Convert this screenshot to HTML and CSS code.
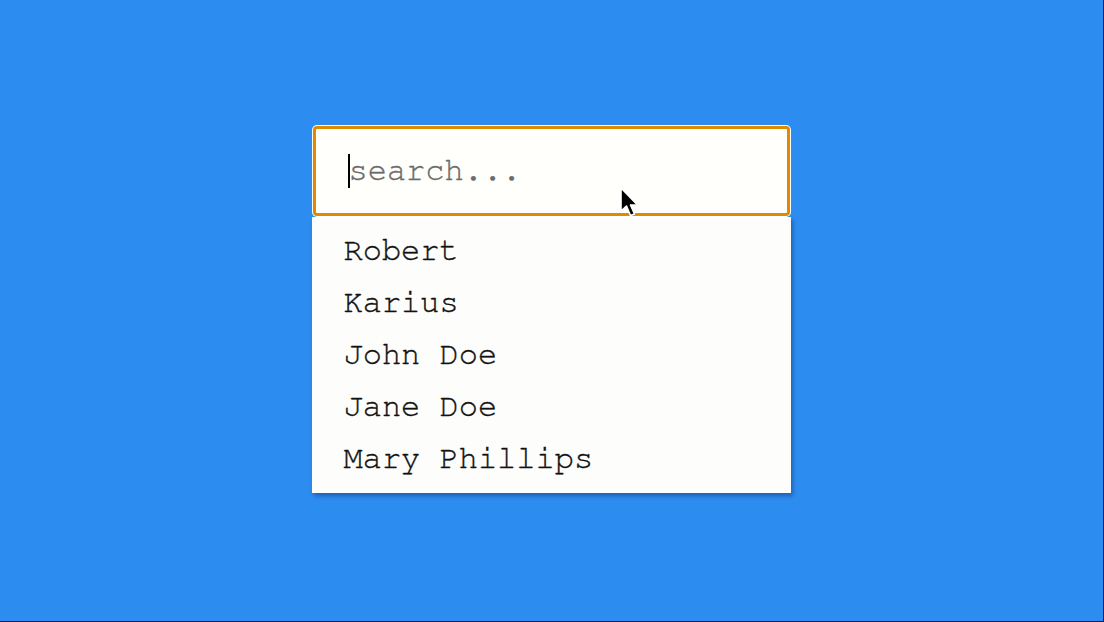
FILE: index.html
```html
<!DOCTYPE html>
<html lang="en">
<head>
<meta charset="utf-8">
<title>Search</title>
<link rel="stylesheet" href="styles.css">
</head>
<body>
<main class="stage">
  <div class="search">
    <div class="field">
      <input class="field-input" type="text" placeholder="search...">
      <span class="caret"></span>
      <svg class="pointer" width="22" height="34" viewBox="0 0 22 34" aria-hidden="true">
        <path d="M2 2 L2 25 L7.5 20 L11.5 29.5 L15.5 28 L11.5 19 L18.5 19 Z" fill="#000" stroke="#fff" stroke-width="1.6" stroke-linejoin="round"/>
      </svg>
    </div>
    <ul class="results">
      <li class="result">Robert</li>
      <li class="result">Karius</li>
      <li class="result">John Doe</li>
      <li class="result">Jane Doe</li>
      <li class="result">Mary Phillips</li>
    </ul>
  </div>
</main>
</body>
</html>
```

FILE: styles.css
```css
* { box-sizing: border-box; }

html, body {
  margin: 0;
  padding: 0;
  height: 100%;
}

body {
  font-family: "Nimbus Mono PS", "FreeMono", "Courier New", "Courier", "Liberation Mono", monospace;
  background: #1c1c1c;
}

.stage {
  width: 1103px;
  height: 621px;
  padding-bottom: 3px;
  background: #2d8cf0;
  display: flex;
  align-items: center;
  justify-content: center;
}

.search {
  width: 479px;
  margin-right: 1px;
  display: flex;
  flex-direction: column;
}

.field {
  position: relative;
  height: 92px;
  border-radius: 5px;
  background: #fff;
  padding: 1px;
}

.field-input {
  display: block;
  width: 100%;
  height: 100%;
  border: 3px solid #e08a00;
  border-radius: 4px;
  background: #fffffc;
  outline: none;
  padding: 0 0 2px 33px;
  font-family: inherit;
  font-size: 32px;
  color: #111;
  -webkit-text-stroke: 0.35px #6b6b6b;
}

.field-input::placeholder {
  color: #6b6b6b;
  opacity: 1;
}

.caret {
  position: absolute;
  left: 36px;
  top: 29px;
  width: 2px;
  height: 34px;
  background: #000;
}

.pointer {
  position: absolute;
  left: 307px;
  top: 61px;
}

.results {
  list-style: none;
  margin: 0;
  padding: 7px 0 9px;
  background: #fdfdfb;
  box-shadow: 2px 3px 4px rgba(0, 0, 40, 0.3);
}

.result {
  height: 52px;
  line-height: 52px;
  padding-left: 32px;
  font-size: 32px;
  color: #111;
  -webkit-text-stroke: 0.35px #111;
  white-space: pre;
}
```
